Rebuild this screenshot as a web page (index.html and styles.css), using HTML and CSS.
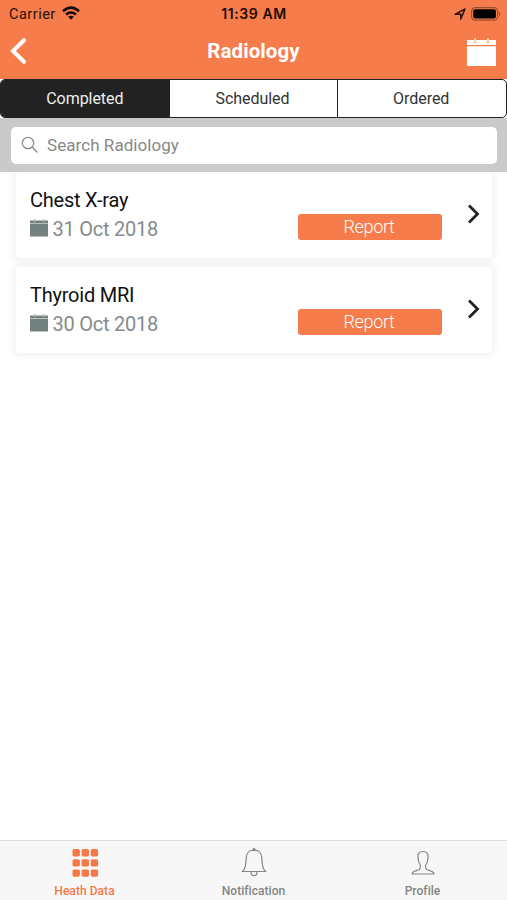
FILE: index.html
```html
<!DOCTYPE html>
<html lang="en">
<head>
<meta charset="utf-8">
<title>Radiology</title>
<link rel="stylesheet" href="styles.css">
</head>
<body>
<div class="app">
  <header class="top">
    <div class="status">
      <div class="carrier"><span>Carrier</span>
        <svg width="18" height="15" viewBox="0 0 18 15" fill="none" stroke="#110a07" stroke-width="2.6"><path d="M1 5.2Q9-1.8 17 5.2M4 8.6q5-4.2 10 0"/><path d="M6.2 10.8Q9 8.6 11.8 10.8L9 13.8z" fill="#110a07" stroke="none"/></svg>
      </div>
      <div class="time">11:39 AM</div>
      <div class="indicators">
        <svg width="12" height="12" viewBox="0 0 12 12" fill="none" stroke="#2a1109" stroke-width="1.5" stroke-linejoin="round"><path d="M1 6.3L11 1 6.8 11V6.3z"/></svg>
        <svg width="30" height="14" viewBox="0 0 30 14"><rect x=".6" y=".6" width="26" height="12.6" rx="3.8" fill="none" stroke="#9b4c30" stroke-width="1.2"/><rect x="2.3" y="2.3" width="22.6" height="9.2" rx="2" fill="#000"/><path d="M28 4.5q2.4 2.4 0 4.8z" fill="#9b4c30"/></svg>
      </div>
    </div>
    <nav class="titlebar">
      <svg class="back" width="18" height="28" viewBox="0 0 18 28" fill="none" stroke="#fff" stroke-width="4" stroke-linecap="round"><path d="M15 3.2L4 14l11 10.8"/></svg>
      <h1>Radiology</h1>
      <svg class="calendar" width="29" height="29" viewBox="0 0 29 29"><path d="M0 2h29v5H0zM0 8.3h29V28H0z" fill="#fff"/><path d="M8 1v4M21 1v4" stroke="#f9a583" stroke-width="2.2"/><path d="M8 0v4M21 0v4" stroke="#fff" stroke-width="1"/></svg>
    </nav>
  </header>
  <div class="segments">
    <div class="segment active"><span>Completed</span></div>
    <div class="segment"><span>Scheduled</span></div>
    <div class="segment"><span>Ordered</span></div>
  </div>
  <div class="search">
    <div class="field">
      <svg width="18" height="18" viewBox="0 0 18 18" fill="none" stroke="#8b8b8b" stroke-width="1.3"><circle cx="7" cy="7" r="5.7"/><path d="M11.2 11.2l5.3 5.3"/></svg>
      <span>Search Radiology</span>
    </div>
  </div>
  <main class="list">
    <article class="card">
      <div class="info">
        <div class="name"><span>Chest X-ray</span></div>
        <div class="date"><svg width="18" height="18" viewBox="0 0 18 18" fill="#74827f"><path d="M0 1.500h18v3H0zM0 5h18v12.500H0z"/><path d="M4.500 0v3M13.500 0v3" stroke="#b3bbb9" stroke-width="1.500"/></svg><span>31 Oct 2018</span></div>
      </div>
      <div class="report"><span>Report</span></div>
      <svg class="chevron" width="14" height="20" viewBox="0 0 14 20" fill="none" stroke="#222" stroke-width="2.800"><path d="M2 1.500L10.500 10 2 18.500"/></svg>
    </article>
    <article class="card">
      <div class="info">
        <div class="name"><span>Thyroid MRI</span></div>
        <div class="date"><svg width="18" height="18" viewBox="0 0 18 18" fill="#74827f"><path d="M0 1.500h18v3H0zM0 5h18v12.500H0z"/><path d="M4.500 0v3M13.500 0v3" stroke="#b3bbb9" stroke-width="1.500"/></svg><span>30 Oct 2018</span></div>
      </div>
      <div class="report"><span>Report</span></div>
      <svg class="chevron" width="14" height="20" viewBox="0 0 14 20" fill="none" stroke="#222" stroke-width="2.800"><path d="M2 1.500L10.500 10 2 18.500"/></svg>
    </article>
  </main>
  <footer class="tabs">
    <div class="tab on">
      <svg width="28" height="30" viewBox="0 0 28 30" fill="#f67846"><rect x="1.500" y="1" width="7.400" height="7.400" rx="1.700"/><rect x="10.600" y="1" width="7.400" height="7.400" rx="1.700"/><rect x="19.700" y="1" width="7.400" height="7.400" rx="1.700"/><rect x="1.500" y="11.200" width="7.400" height="7.400" rx="1.700"/><rect x="10.600" y="11.200" width="7.400" height="7.400" rx="1.700"/><rect x="19.700" y="11.200" width="7.400" height="7.400" rx="1.700"/><rect x="1.500" y="21.400" width="7.400" height="7.400" rx="1.700"/><rect x="10.600" y="21.400" width="7.400" height="7.400" rx="1.700"/><rect x="19.700" y="21.400" width="7.400" height="7.400" rx="1.700"/></svg>
      <span>Heath Data</span>
    </div>
    <div class="tab">
      <svg width="28" height="30" viewBox="0 0 28 30" fill="none" stroke="#858585" stroke-width="1.200"><path d="M14 2c-5 0-7.500 3.500-7.800 8-.4 7-.6 10-3.700 13.500h23C22.400 20 22.200 17 21.800 10 21.500 5.500 19 2 14 2zM11 24c0 5 6 5 6 0"/><circle cx="14" cy="1.700" r="1" fill="#858585"/></svg>
      <span>Notification</span>
    </div>
    <div class="tab">
      <svg width="28" height="30" viewBox="0 0 28 30" fill="none" stroke="#858585" stroke-width="1.200"><path d="M14 3.500c-4 0-5.500 2.500-5 6 .2 3 .8 5.500 2 7 .8 1 .5 4-.8 5C8 23 3.500 22.500 3 26h22c-.5-3.500-5-3-7.200-4.500-1.300-1-1.600-4-.8-5 1.200-1.500 1.800-4 2-7 .5-3.500-1-6-5-6z"/></svg>
      <span>Profile</span>
    </div>
  </footer>
</div>
</body>
</html>
```
FILE: styles.css
```css
* { box-sizing: border-box; }
body { margin: 0; background: #fff; font-family: Roboto, "Liberation Sans", sans-serif; }
svg { display: block; flex: none; }
span { white-space: nowrap; }
.app { width: 507px; height: 900px; display: flex; flex-direction: column; overflow: hidden; }
.top { height: 79px; background: #f67c4b; flex: none; }
.status { height: 27px; display: grid; grid-template-columns: 1fr auto 1fr; align-items: center; padding: 0 6px 0 9px; color: #2a1109; }
.carrier { display: flex; align-items: center; gap: 6px; font-size: 14.5px; line-height: 17px; padding-top: 1px; letter-spacing: .5px; }
.carrier svg { margin-top: -2px; }
.time { font: 600 14px Inter, sans-serif; letter-spacing: .6px; margin-right: 2px; color: #1c0c06; }
.indicators { display: flex; justify-content: flex-end; align-items: center; gap: 5px; }
.titlebar { height: 52px; display: grid; grid-template-columns: 1fr auto 1fr; align-items: center; padding: 0 11px 4px 9px; }
.titlebar h1 { margin: 0 0 0 2px; color: #fff; font-size: 20.5px; line-height: 24px; letter-spacing: .1px; font-weight: 700; }
.calendar { justify-self: end; margin-top: 3px; }
.segments { height: 39px; flex: none; display: flex; border: 1px solid #222; border-radius: 5px; background: #fff; }
.segment { flex: 1; display: flex; align-items: center; justify-content: center; padding: 0 2px 1px 0; font-size: 16px; color: #333; letter-spacing: -.05px; border-left: 1px solid #222; }
.segment.active { background: #222; color: #eee; border: 0; border-radius: 4px 0 0 4px; padding: 0 1px 1px; }
.search { height: 54px; flex: none; background: #cacaca; padding: 9px 10px 8px 11px; }
.field { height: 37px; background: #fff; border-radius: 5px; display: flex; align-items: center; padding: 0 0 1px 10px; gap: 8px; font-size: 17px; letter-spacing: .06px; color: #888; }
.list { flex: 1; padding: 0 15px 0 16px; display: flex; flex-direction: column; gap: 9px; overflow: hidden; }
.card { height: 86px; flex: none; display: flex; background: #fff; border-radius: 3px; box-shadow: 0 0 7px 3px rgba(0,0,0,.055); padding: 16px 11px 0 14px; }
.info { width: 268px; }
.name { font-size: 20px; line-height: 25px; letter-spacing: -.23px; color: #111; }
.date { display: flex; align-items: center; gap: 4.5px; margin-top: 4px; font-size: 20px; line-height: 25px; letter-spacing: -.25px; color: #858b8b; }
.date svg { margin-top: -4px; }
.report { width: 144px; height: 26px; margin-top: 26px; padding-right: 2px; background: #f67c4b; border-radius: 3px; text-align: center; font-size: 18px; line-height: 25px; font-weight: 300; letter-spacing: -.35px; color: #fff; }
.chevron { margin: 16px 0 0 auto; }
.tabs { height: 60px; flex: none; display: flex; background: #f7f7f7; border-top: 1px solid #ddd; }
.tab { flex: 1; display: flex; flex-direction: column; align-items: center; padding-top: 7px; font-size: 12px; line-height: 14px; font-weight: 500; letter-spacing: .05px; color: #858585; }
.tab span { margin-top: 6px; }
.tab.on { color: #f67846; }
```
